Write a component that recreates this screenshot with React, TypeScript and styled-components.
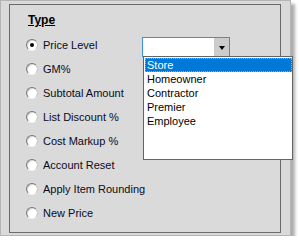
import React from "react";
import styled, { createGlobalStyle } from "styled-components";

const GlobalStyle = createGlobalStyle`
  html, body {
    margin: 0;
    padding: 0;
    background: #fff;
  }
  body {
    font-family: "Liberation Sans", Arial, sans-serif;
  }
`;

const options = [
  "Price Level",
  "GM%",
  "Subtotal Amount",
  "List Discount %",
  "Cost Markup %",
  "Account Reset",
  "Apply Item Rounding",
  "New Price",
];

const levels = ["Store", "Homeowner", "Contractor", "Premier", "Employee"];

export default function App() {
  return (
    <>
      <GlobalStyle />
      <Panel>
        <GroupBox>
          <Legend>Type</Legend>
          <OptionList>
            {options.map((label, i) => (
              <OptionRow key={label}>
                <Radio $checked={i === 0} />
                <OptionLabel $wide={i !== 0}>{label}</OptionLabel>
                {i === 0 && (
                  <Combo>
                    <ComboField />
                    <ComboButton>
                      <Arrow />
                    </ComboButton>
                    <DropList>
                      {levels.map((lvl, j) => (
                        <DropItem key={lvl} $selected={j === 0}>
                          {lvl}
                        </DropItem>
                      ))}
                    </DropList>
                  </Combo>
                )}
              </OptionRow>
            ))}
          </OptionList>
        </GroupBox>
      </Panel>
    </>
  );
}

const Panel = styled.div`
  box-sizing: border-box;
  width: 291px;
  height: 236px;
  background: #dadada;
  border: 1px solid #b4b4b4;
  box-shadow: 4px 4px 3px rgba(0, 0, 0, 0.32);
  padding: 3px 0 0 8px;
`;

const GroupBox = styled.div`
  box-sizing: border-box;
  width: 272px;
  height: 229px;
  border: 1px solid #6a6a6a;
  padding: 8px 0 0 16px;
`;

const Legend = styled.div`
  margin-left: 2px;
  font-size: 12px;
  line-height: 14px;
  font-weight: bold;
  text-decoration: underline;
  color: #000;
`;

const OptionList = styled.div`
  display: flex;
  flex-direction: column;
  margin-top: 6px;
`;

const OptionRow = styled.div`
  display: grid;
  grid-template-columns: 12px 94px auto;
  column-gap: 5px;
  align-items: center;
  height: 24px;
`;

const Radio = styled.span<{ $checked?: boolean }>`
  box-sizing: border-box;
  width: 12px;
  height: 12px;
  margin-top: -1px;
  border-radius: 50%;
  background: #fff;
  border: 1px solid;
  border-color: #7a7a7a #c4c4c4 #f2f2f2 #7a7a7a;
  box-shadow: inset 1px 1px 0 #d8d8d8;
  position: relative;

  &::after {
    content: "";
    display: ${(p) => (p.$checked ? "block" : "none")};
    position: absolute;
    left: 3px;
    top: 3px;
    width: 4px;
    height: 4px;
    border-radius: 50%;
    background: #000;
  }
`;

const OptionLabel = styled.span<{ $wide?: boolean }>`
  grid-column: ${(p) => (p.$wide ? "2 / span 2" : "2")};
  font-size: 11px;
  line-height: 13px;
  color: #0a0a1a;
  white-space: nowrap;
`;

const Combo = styled.div`
  position: relative;
  align-self: end;
  box-sizing: border-box;
  width: 88px;
  height: 20px;
  border: 1px solid #3c8fd9;
  background: #fff;
  display: flex;
`;

const ComboField = styled.div`
  flex: 1;
`;

const ComboButton = styled.div`
  width: 15px;
  background: #cccccc;
  display: flex;
  align-items: center;
  justify-content: center;
`;

const Arrow = styled.span`
  width: 0;
  height: 0;
  border-left: 3.5px solid transparent;
  border-right: 3.5px solid transparent;
  border-top: 4px solid #000;
  margin-top: 1px;
`;

const DropList = styled.div`
  position: absolute;
  top: 100%;
  left: 0;
  box-sizing: border-box;
  width: 150px;
  height: 104px;
  background: #fff;
  border: 1px solid #646464;
  padding: 1px 0 0 1px;
  z-index: 2;
`;

const DropItem = styled.div<{ $selected?: boolean }>`
  height: 14px;
  line-height: 14px;
  font-size: 11px;
  padding-left: 2px;
  color: ${(p) => (p.$selected ? "#fff" : "#000")};
  background: ${(p) => (p.$selected ? "#0078d7" : "transparent")};
  outline: ${(p) => (p.$selected ? "1px dotted #f39b2b" : "none")};
  outline-offset: -1px;
`;
